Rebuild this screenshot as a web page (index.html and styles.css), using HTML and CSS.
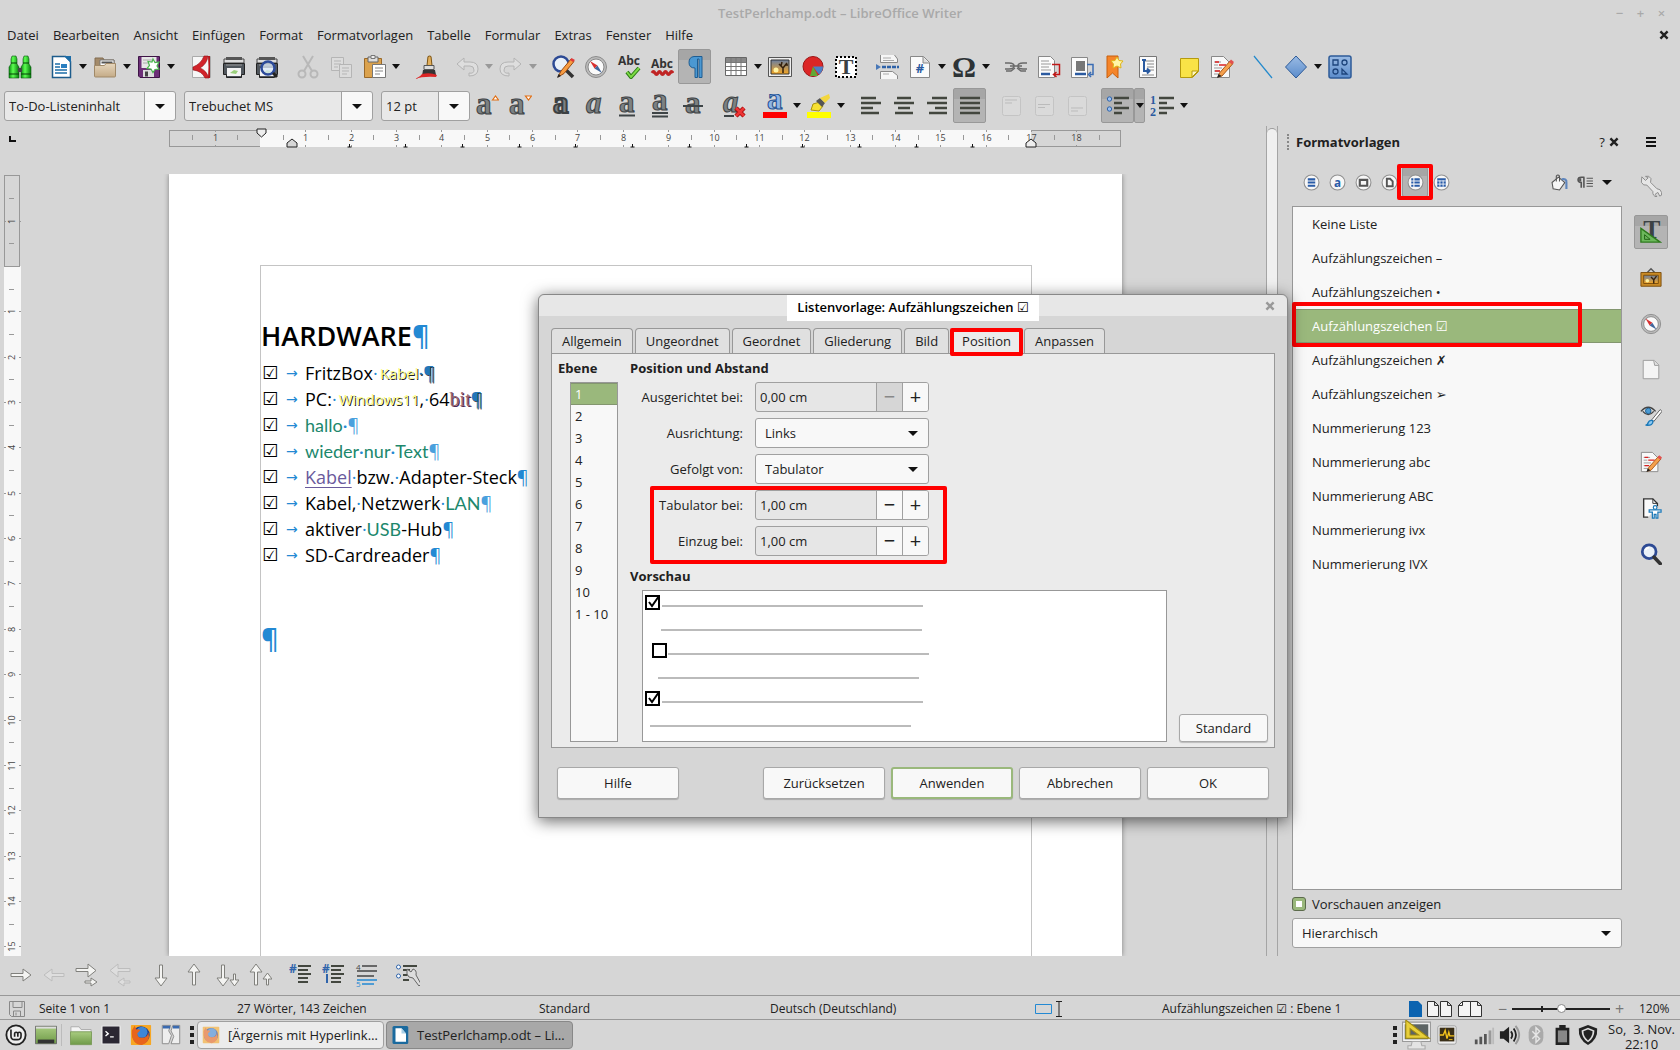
FILE: index.html
```
<!DOCTYPE html>
<html lang="de">
<head>
    <meta charset="UTF-8">
    <meta name="viewport" content="width=device-width, initial-scale=1.0">
    <title>TestPerlchamp.odt – LibreOffice Writer</title>
    <link rel="stylesheet" href="styles.css">
</head>
<body>
    <!-- gradients for the icons -->
    <svg class="gradients" aria-hidden="true">
        <defs>
            <linearGradient id="g-green" x1="0" x2="1"><stop offset="0" stop-color="#0a8a10"/><stop offset=".4" stop-color="#5cff50"/><stop offset="1" stop-color="#067a0c"/></linearGradient>
            <linearGradient id="g-folder" x1="0" x2="0" y1="0" y2="1"><stop offset="0" stop-color="#e6d6bd"/><stop offset="1" stop-color="#c4ab87"/></linearGradient>
            <linearGradient id="g-mint" x1="0" x2="0" y1="0" y2="1"><stop offset="0" stop-color="#a9cc80"/><stop offset="1" stop-color="#6f9a48"/></linearGradient>
            <linearGradient id="g-sky" x1="0" x2="0" y1="0" y2="1"><stop offset="0" stop-color="#6b7fa0"/><stop offset="1" stop-color="#f5a623"/></linearGradient>
            <linearGradient id="g-blue" x1="0" x2="0" y1="0" y2="1"><stop offset="0" stop-color="#9abbe4"/><stop offset="1" stop-color="#5b8ccb"/></linearGradient>
        </defs>
    </svg>
    <!-- icon sprite -->
    <svg class="sprite" aria-hidden="true">
        <symbol id="i-find" viewBox="0 0 24 24"><g fill="url(#g-green)" stroke="#0a5a10" stroke-width=".6"><path d="M4 1h4l1 3v5l2 3v11H1V12l2-3V4z"/><path d="M16 1h4l1 3v5l2 3v11H13V12l2-3V4z"/></g><path d="M10 13h4v4h-4z" fill="#444"/><path d="M1 19h10M13 19h10M3 8h6M15 8h6" stroke="#063f08"/></symbol>
        <symbol id="i-new" viewBox="0 0 24 24"><path d="M3.500 1.500h13l5 5v16h-18z" fill="#fff" stroke="#1d5c8c" stroke-width="1.500"/><path d="M15 1h7v7z" fill="#1d6da8"/><path d="M6 9h5M6 12h5M6 15h12M6 18h12" stroke="#1d6da8" stroke-width="1.500"/><path d="M12 9h6v4h-6z" fill="#2a7fc0"/></symbol>
        <symbol id="i-open" viewBox="0 0 24 24"><path d="M2 3h8l1 2h10v9H2z" fill="#a48b6a" stroke="#826d50"/><path d="M7 5h14v10H7z" fill="#fff" stroke="#777"/><path d="M8.500 6.500h11v2h-11z" fill="#555"/><path d="M1.500 10.500h10l1.500-2h9.500v12.500q0 1-1 1h-19q-1 0-1-1z" fill="url(#g-folder)" stroke="#a08968"/></symbol>
        <symbol id="i-save" viewBox="0 0 24 24"><path d="M1.500 1.500h21v21H3l-1.500-1.500z" fill="#6d2f78" stroke="#3e1546"/><path d="M4.500 2h15v11h-15z" fill="#e7e7e7"/><path d="M6 5h10M6 8h8" stroke="#aaa"/><path d="M6 15h11v7H6z" fill="#ddd"/><path d="M8 16.500h3v5H8z" fill="#444"/><path d="M16 4l2 3.500 4-.5-2 4 2 3-4 .5-2 3-2-3.500-4-.5 2.500-3-1.500-4 4 .5z" fill="#fff" stroke="#49b44d" stroke-width="1.200"/></symbol>
        <symbol id="i-pdf" viewBox="0 0 24 24"><path d="M3.500 1.500h18v21h-18z" fill="#f6f6f6" stroke="#aaa"/><path d="M15 1h4q-1 8-8 12 6 2 9 10h-4Q13 16 4 15v-3Q12 9 15 1z" fill="#d2232a" stroke="#8f1216" stroke-width=".6"/><path d="M21 1v22h-2q1-11 0-22z" fill="#b3161b"/></symbol>
        <symbol id="i-print" viewBox="0 0 24 24"><path d="M2 4h20v4H2z" fill="#ddd" stroke="#444"/><path d="M4 2h16v3H4z" fill="#555"/><path d="M1.500 8.500h21v11h-3v3h-15v-3h-3z" fill="#50565c" stroke="#222"/><path d="M5 13h14v8H5z" fill="#f4f4f4"/><path d="M8 18l4-3 4 1-2 3z" fill="#9bd07c"/><path d="M4 10h16" stroke="#999"/></symbol>
        <symbol id="i-preview" viewBox="0 0 24 24"><use href="#i-print"/><circle cx="13" cy="13" r="6.500" fill="#dbe8f8" fill-opacity=".75" stroke="#2c4a9a" stroke-width="2.500"/><path d="M18 18l4 4" stroke="#222" stroke-width="3"/></symbol>
        <symbol id="i-cut" viewBox="0 0 24 24"><g fill="none" stroke="#b8b8b8" stroke-width="2"><path d="M7 1l9 15M17 1L8 16"/><circle cx="6" cy="19" r="3.500"/><circle cx="18" cy="19" r="3.500"/></g></symbol>
        <symbol id="i-copy" viewBox="0 0 24 24"><g fill="#dcdcdc" stroke="#b5b5b5"><path d="M2.500 2.500h12v13h-12z"/><path d="M10.500 9.500h12v13h-12z"/><path d="M5 6h7M5 9h7M5 12h4M13 13h7M13 16h7M13 19h5"/></g></symbol>
        <symbol id="i-paste" viewBox="0 0 24 24"><path d="M2.500 3.500h17v19h-17z" fill="#dba24d" stroke="#99692a"/><path d="M6 2h10v5H6z" fill="#ddd" stroke="#666"/><path d="M9 .5h4v3H9z" fill="#eee" stroke="#777"/><path d="M10.500 9.500h13v13h-13z" fill="#fff" stroke="#777"/><path d="M13 13h8M13 16h8M13 19h5" stroke="#888"/></symbol>
        <symbol id="i-brush" viewBox="0 0 24 24"><path d="M14 1.500q2-1 3 0l1 9h-5z" fill="#e3b05c" stroke="#7c5312"/><path d="M10 10.500h10v4H10z" fill="#ddd" stroke="#555"/><path d="M9 15h12l1 5-14 1z" fill="#353535"/><path d="M8 19q8-2 15 1l-1 2q-12-1-22 2q6-2 8-5z" fill="#dc2626"/></symbol>
        <symbol id="i-undo" viewBox="0 0 24 24"><path d="M9 3L2 9l7 6v-4h6q4 0 4 4t-5 3v3q9 0 9-7t-8-7H9z" fill="#dedede" stroke="#b4b4b4"/></symbol>
        <symbol id="i-redo" viewBox="0 0 24 24"><path d="M15 3l7 6-7 6v-4H9q-4 0-4 4t5 3v3q-9 0-9-7t8-7h6z" fill="#dedede" stroke="#b4b4b4"/></symbol>
        <symbol id="i-lens" viewBox="0 0 24 24"><circle cx="10" cy="9.500" r="7.500" fill="#e9f0f8" stroke="#2d4a94" stroke-width="3"/><path d="M15.500 15.500l6.500 7" stroke="#333" stroke-width="4" stroke-linecap="round"/><path d="M6 8q1-3 4-3" fill="none" stroke="#fff" stroke-width="2"/></symbol>
        <symbol id="i-replace" viewBox="0 0 24 24"><circle cx="10" cy="9" r="7.500" fill="#e9f0f8" stroke="#2d4a94" stroke-width="2.500"/><path d="M15 15l7 7" stroke="#333" stroke-width="3.500"/><path d="M7 22l3-6L20 4l3 2.500-10 12z" fill="#f79c42" stroke="#9b4c12"/><path d="M19 5l1.500-2 3.500 2-2 2z" fill="#e03a3a"/><path d="M6 23l1.500-4 2.500 2z" fill="#222"/></symbol>
        <symbol id="i-compass" viewBox="0 0 24 24"><circle cx="12" cy="12" r="10.500" fill="#bbb" stroke="#8c8c8c"/><circle cx="12" cy="12" r="8" fill="#fafafa" stroke="#888"/><path d="M6 6l7.500 4.500-3 3z" fill="#d93030"/><path d="M18 18l-7.500-4.500 3-3z" fill="#42679d"/></symbol>
        <symbol id="i-spell" viewBox="0 0 24 24"><text class="abc" x="12" y="10">Abc</text><path d="M10 17l4 5 8-9" fill="none" stroke="#2c7a16" stroke-width="4"/><path d="M10 17l4 5 8-9" fill="none" stroke="#7ddb45" stroke-width="2"/></symbol>
        <symbol id="i-auto" viewBox="0 0 24 24"><text class="abc" x="12" y="13">Abc</text><path d="M2 18q1.500-3 3 0t3 0 3 0 3 0 3 0 3 0 3 0" fill="none" stroke="#c02424" stroke-width="3"/></symbol>
        <symbol id="i-pilcrow" viewBox="0 0 24 24"><path d="M19 1.500h-8Q6 2 6 7.500t6 5.500v9.500h2.500V4h1.500v18.500h3z" fill="#4b98d2" stroke="#1e5d92"/></symbol>
        <symbol id="i-table" viewBox="0 0 24 24"><path d="M1.500 2.500h21v18h-21z" fill="#fff" stroke="#666"/><path d="M2 3h20v4H2z" fill="#888"/><path d="M2 7.500h20M2 11.500h20M2 15.500h20M7 3v17M12 3v17M17 3v17" stroke="#777"/></symbol>
        <symbol id="i-image" viewBox="0 0 24 24"><path d="M.5 2.500h23v19H.5z" fill="#eee" stroke="#555"/><path d="M3 5h18v14H3z" fill="url(#g-sky)" stroke="#333"/><circle cx="8" cy="15" r="2.500" fill="#fff2a0"/><path d="M15 18v-5l-4-4M15 13l4-5M13 11l1-4M17 10l3 0" fill="none" stroke="#33200e" stroke-width="1.500"/></symbol>
        <symbol id="i-chart" viewBox="0 0 24 24"><circle cx="12" cy="11.500" r="10" fill="#dc2626" stroke="#9c1515"/><path d="M12 11.500h10a10 10 0 0 1-4 8z" fill="#4c80c6"/><path d="M12 11.500l5 9.500H9z" fill="#62a834"/></symbol>
        <symbol id="i-textbox" viewBox="0 0 24 24"><path d="M2 2h20v20H2z" fill="#fff" stroke="#000" stroke-width="2" stroke-dasharray="2 2"/><text class="serif-t" x="12" y="19">T</text></symbol>
        <symbol id="i-break" viewBox="0 0 24 24"><path d="M5.500 0v7.500h17V4l-3-4" fill="#f6f6f6" stroke="#888"/><path d="M5.500 24v-7.500h12l5 4V24" fill="#f6f6f6" stroke="#888"/><path d="M8 3h8M8 5.500h11M8 19h6" stroke="#aaa"/><path d="M1 9l5 3-5 3z" fill="#4878b8"/><path d="M7 12h17" stroke="#2e62a8" stroke-width="2.500" stroke-dasharray="4 1"/></symbol>
        <symbol id="i-field" viewBox="0 0 24 24"><path d="M2.500 1.500h13l6 6v15h-19z" fill="#fbfbfb" stroke="#888"/><path d="M15 2v6h6" fill="#ddd" stroke="#888"/><text class="hash" x="12" y="18">#</text></symbol>
        <symbol id="i-omega" viewBox="0 0 24 24"><text class="omega" x="12" y="22">Ω</text></symbol>
        <symbol id="i-link" viewBox="0 0 24 24"><g fill="none" stroke="#6a6a6a" stroke-width="1.500"><path d="M1 8h4q5 0 5 3t-5 3H1M23 8h-4q-5 0-5 3t5 3h4"/><path d="M6 11h12M2 16h5l4-3M22 16h-5l-4-3"/></g></symbol>
        <symbol id="i-footnote" viewBox="0 0 24 24"><path d="M1.500 1.500h12l4 4v17h-16z" fill="#fbfbfb" stroke="#888"/><path d="M4 6h8M4 9h10M4 12h8M4 15h10" stroke="#999"/><path d="M4 19h9" stroke="#2a5aa0" stroke-width="2.500"/><path d="M15 9.500h7.500v10h-5m2-2.500l-3 2.500 3 2.500" fill="none" stroke="#c01818" stroke-width="1.500"/></symbol>
        <symbol id="i-endnote" viewBox="0 0 24 24"><path d="M1.500 2.500h16v20h-16z" fill="#fbfbfb" stroke="#888"/><path d="M6 6h9v10H6z" fill="#777"/><path d="M5 19h11" stroke="#2a5aa0" stroke-width="2.500"/><path d="M17 9.500h6v10h-3m1-2.500l-2.500 2.500 2.500 2.500" fill="none" stroke="#3a6cb4" stroke-width="1.500"/></symbol>
        <symbol id="i-bookmark" viewBox="0 0 24 24"><path d="M4 1h11v22l-5.500-5L4 23z" fill="#f5852a" stroke="#c85f0d"/><path d="M14 2l2 3.500 4 .5-2.500 3 .5 4-4-2-4 2 .5-4-2.500-3 4-.5z" fill="#fff6a8" stroke="#e0b516"/></symbol>
        <symbol id="i-xref" viewBox="0 0 24 24"><path d="M3.500 1.500h17v21h-17z" fill="#fbfbfb" stroke="#777"/><path d="M9 6h9M11 9h7M11 12h7M11 15h7M6 20h12" stroke="#888"/><path d="M6 5h4M8 5v11h5m-2-2.500l2.500 2.500-2.500 2.500" fill="none" stroke="#2a5aa0" stroke-width="2"/></symbol>
        <symbol id="i-note" viewBox="0 0 24 24"><path d="M3.500 3.500h18v13l-6 6h-12z" fill="#f9e347" stroke="#b59a0e"/><path d="M15 22v-6h6z" fill="#fff9c0" stroke="#b59a0e"/></symbol>
        <symbol id="i-track" viewBox="0 0 24 24"><path d="M1.500 1.500h12l6 6v15h-18z" fill="#f8f8f8" stroke="#888"/><path d="M4 7h7M4 10h4M4 13h8M4 16h6M4 19h5" stroke="#999"/><path d="M5 7h4M9 10h7M5 16h5" stroke="#dc2020" stroke-width="1.500"/><path d="M8 22l1.500-4L20 6l3 2.500L12 21z" fill="#f5a04c" stroke="#a8581a"/><path d="M19 7l2-2.500 3 2.500-2 2.500z" fill="#e25050"/><path d="M7 23l1.500-4 3 2z" fill="#222"/></symbol>
        <symbol id="i-line" viewBox="0 0 24 24"><path d="M3 1l18 22" stroke="#2289cc" stroke-width="1.200"/></symbol>
        <symbol id="i-diamond" viewBox="0 0 24 24"><path d="M12 1l10.500 11L12 23 1.500 12z" fill="url(#g-blue)" stroke="#2e5b98"/></symbol>
        <symbol id="i-shapes" viewBox="0 0 24 24"><rect x="1" y="1" width="22" height="22" rx="2" fill="url(#g-blue)" stroke="#2e5b98" stroke-width="1.500"/><g fill="none" stroke="#1d447c" stroke-width="1.300"><path d="M5 5h5v5H5zM14 14v5h5z"/><circle cx="16.500" cy="7.500" r="2.500"/><circle cx="7.500" cy="16.500" r="2.500"/></g></symbol>

        <symbol id="i-grow" viewBox="0 0 24 24"><text class="a-dark" x="1" y="20">a</text><path d="M17.500 6l3-4 3 4z" fill="#fff" stroke="#e06c10" stroke-width="1.200"/></symbol>
        <symbol id="i-shrink" viewBox="0 0 24 24"><text class="a-dark" x="1" y="20">a</text><path d="M17.500 2h6l-3 4z" fill="#fff" stroke="#e06c10" stroke-width="1.200"/></symbol>
        <symbol id="i-bold" viewBox="0 0 24 24"><text class="a-dark heavy" x="4" y="19">a</text></symbol>
        <symbol id="i-italic" viewBox="0 0 24 24"><text class="a-dark slant" x="4" y="19">a</text></symbol>
        <symbol id="i-under" viewBox="0 0 24 24"><text class="a-dark" x="4" y="18">a</text><path d="M4 21.500h16" stroke="#3e4446" stroke-width="2"/></symbol>
        <symbol id="i-dunder" viewBox="0 0 24 24"><text class="a-dark" x="4" y="16">a</text><path d="M4 19h16M4 22.500h16" stroke="#3e4446" stroke-width="2"/></symbol>
        <symbol id="i-strike" viewBox="0 0 24 24"><text class="a-dark" x="4" y="19">a</text><path d="M2 12h20" stroke="#3e4446" stroke-width="2"/></symbol>
        <symbol id="i-clear" viewBox="0 0 24 24"><text class="a-dark slant" x="1" y="18">a</text><path d="M2 22h10" stroke="#3e4446" stroke-width="2"/><path d="M14 14l8 8M22 14l-8 8" stroke="#a30d0d" stroke-width="4.500"/><path d="M14 14l8 8M22 14l-8 8" stroke="#ee3434" stroke-width="2.500"/></symbol>
        <symbol id="i-color" viewBox="0 0 24 24"><text class="a-dark a-blue" x="4" y="15">a</text><path d="M0 18h24v6H0z" fill="#f00"/></symbol>
        <symbol id="i-mark" viewBox="0 0 24 24"><path d="M4 16l2-6 7-2 3 4-4 5z" fill="#f7e032" stroke="#a8930b"/><path d="M9 7l4-3 5 5-3 4z" fill="#555"/><path d="M13 4l9-4 1 4-5 5z" fill="#f3d63e"/><path d="M0 18h24v6H0z" fill="#ff0"/></symbol>
        <symbol id="i-left" viewBox="0 0 24 24"><path d="M2 4h15M2 9h20M2 14h12M2 19h18" stroke="#43473f" stroke-width="2.500"/></symbol>
        <symbol id="i-center" viewBox="0 0 24 24"><path d="M5 4h14M2 9h20M6 14h12M3 19h18" stroke="#43473f" stroke-width="2.500"/></symbol>
        <symbol id="i-right" viewBox="0 0 24 24"><path d="M7 4h15M2 9h20M10 14h12M4 19h18" stroke="#43473f" stroke-width="2.500"/></symbol>
        <symbol id="i-just" viewBox="0 0 24 24"><path d="M2 4h20M2 9h20M2 14h20M2 19h20" stroke="#43473f" stroke-width="2.500"/></symbol>
        <symbol id="i-vtop" viewBox="0 0 24 24"><rect x="3.500" y="2.500" width="18" height="19" rx="2" fill="#dadada" stroke="#c4c4c4"/><path d="M6 6h12M6 9h7" stroke="#bbb"/></symbol>
        <symbol id="i-vmid" viewBox="0 0 24 24"><rect x="3.500" y="2.500" width="18" height="19" rx="2" fill="#dadada" stroke="#c4c4c4"/><path d="M6 10.500h12M6 13.500h7" stroke="#bbb"/></symbol>
        <symbol id="i-vbot" viewBox="0 0 24 24"><rect x="3.500" y="2.500" width="18" height="19" rx="2" fill="#dadada" stroke="#c4c4c4"/><path d="M6 14h12M6 17h7" stroke="#bbb"/></symbol>
        <symbol id="i-bullets" viewBox="0 0 24 24"><circle cx="3.500" cy="5" r="2.200" fill="#9dc0ee" stroke="#2f64ab"/><circle cx="3.500" cy="15" r="2.200" fill="#9dc0ee" stroke="#2f64ab"/><path d="M8 4h15M8 9h8M8 14h15M8 19h8" stroke="#43473f" stroke-width="2.500"/></symbol>
        <symbol id="i-numbers" viewBox="0 0 24 24"><text class="num" x="0" y="10">1</text><text class="num" x="0" y="22">2</text><path d="M9 4h15M9 9h8M9 14h15M9 19h8" stroke="#43473f" stroke-width="2.500"/></symbol>

        <symbol id="i-s-para" viewBox="0 0 16 16"><circle cx="8" cy="8" r="7" class="ring"/><path d="M4.500 5h7M4.500 8h7M4.500 11h7" stroke="#2a5ca8" stroke-width="2"/></symbol>
        <symbol id="i-s-char" viewBox="0 0 16 16"><circle cx="8" cy="8" r="7" class="ring"/><text class="s-a" x="8" y="12">a</text></symbol>
        <symbol id="i-s-frame" viewBox="0 0 16 16"><circle cx="8" cy="8" r="7" class="ring"/><path d="M4.500 5.500h7v5.500h-7z" fill="none" stroke="#555" stroke-width="2"/></symbol>
        <symbol id="i-s-page" viewBox="0 0 16 16"><circle cx="8" cy="8" r="7" class="ring"/><path d="M5.500 4.500h3l2.500 2.500v4.500H5.500z" fill="none" stroke="#555" stroke-width="1.800"/></symbol>
        <symbol id="i-s-list" viewBox="0 0 16 16"><circle cx="8" cy="8" r="7" class="ring"/><path d="M4 5h2M4 8h2M4 11h2M7 5h5M7 8h5M7 11h5" stroke="#2a5ca8" stroke-width="2"/></symbol>
        <symbol id="i-s-table" viewBox="0 0 16 16"><circle cx="8" cy="8" r="7" class="ring"/><path d="M4 4h8v8H4z" fill="#2a5ca8"/><path d="M4 6.500h8M4 9.500h8M6.500 6v6M9.500 6v6" stroke="#fff" stroke-width=".8"/></symbol>
        <symbol id="i-fill" viewBox="0 0 16 16"><path d="M1 8l6-5 6 5-5 7-6-1z" fill="#f6f6f6" stroke="#555"/><path d="M5 7V2q1.500-2 3 0v5" fill="none" stroke="#555"/><path d="M10 5q5-1 4.500 3v6" fill="none" stroke="#5f86bd" stroke-width="2"/></symbol>
        <symbol id="i-newstyle" viewBox="0 0 16 16"><path d="M7 3H4Q1 3 1 5.500T4 8v5M6.500 3v10" fill="none" stroke="#555" stroke-width="1.500"/><path d="M2 4h2v3H2z" fill="#555"/><path d="M9 4h6M9 6.500h6M9 9h6M9 11.500h6" stroke="#555" stroke-width="1"/></symbol>

        <symbol id="i-wrench" viewBox="0 0 24 24"><path d="M2 2l4 4 3-3-3-1.500Q10 0 12 4l-.5 4 7 7q4 0 5 4t-2 4l-2-4-3 2 2 3q-5-1-4.500-6L7.500 11q-4 1-6-3z" fill="#e6e6e6" stroke="#888"/></symbol>
        <symbol id="i-styles" viewBox="0 0 24 24"><text class="style-t" x="13" y="19">T</text><path d="M1 8l21 15H1z" fill="#6cb85c" stroke="#2d7a1c" stroke-width="1.500"/><path d="M5 15l6 5H5z" fill="none" stroke="#1f5e12"/></symbol>
        <symbol id="i-gallery" viewBox="0 0 24 24"><path d="M8 6l4-4 4 4" fill="none" stroke="#555" stroke-width="1.500"/><path d="M1 6h22v15H1z" fill="#c98a25" stroke="#7a4d0c"/><path d="M4 9h16v9H4z" fill="url(#g-sky)" stroke="#7a4d0c"/><circle cx="8" cy="15" r="2" fill="#fff2a0"/><path d="M15 18v-4l-3-3M15 14l3-4" fill="none" stroke="#33200e" stroke-width="1.500"/></symbol>
        <symbol id="i-page" viewBox="0 0 24 24"><path d="M3.500 1.500h12l5 5v15h-17z" fill="#f4f4f4" stroke="#999"/><path d="M15 2l1 5 4.500 0" fill="#ddd" stroke="#999"/></symbol>
        <symbol id="i-inspect" viewBox="0 0 24 24"><path d="M1 7q8-9 16 0M3 7q6 7 12 0" fill="none" stroke="#444" stroke-width="1.500"/><circle cx="9" cy="6.500" r="3" fill="#4a9bd4" stroke="#1c5e91"/><path d="M22 5L13 16l2 2 9-11z" fill="#fff" stroke="#555"/><path d="M6 22q2 0 3-3t5-2q1 6-8 5z" fill="#8cc8f0" stroke="#1a78b8" stroke-width="1.500"/></symbol>
        <symbol id="i-access" viewBox="0 0 24 24"><path d="M9 22H4V2h10l5 5v3" fill="#fafafa" stroke="#333" stroke-width="1.500"/><path d="M14 2v5h5" fill="none" stroke="#333"/><circle cx="16.500" cy="11.500" r="2" fill="#fff" stroke="#1a78b8" stroke-width="1.300"/><path d="M10 14h13v2.500h-3.500V23h-2v-4h-2v4h-2v-6.500H10z" fill="#fff" stroke="#1a78b8" stroke-width="1.300"/></symbol>

        <symbol id="i-ar" viewBox="0 0 24 24"><path d="M2 10.500h12V6l8 6-8 6v-4.500H2z" class="arw"/></symbol>
        <symbol id="i-al" viewBox="0 0 24 24"><path d="M22 10.500H10V6l-8 6 8 6v-4.500h12z" class="arw off"/></symbol>
        <symbol id="i-arr" viewBox="0 0 24 24"><path d="M1 5.500h12V1l8 6.500-8 6.500V8.500H1z" class="arw"/><path d="M10 18h6v-3l6 4-6 4v-3h-6z" class="arw"/></symbol>
        <symbol id="i-all" viewBox="0 0 24 24"><path d="M22 5.500H10V1L2 7.500l8 6.500V8.500h12z" class="arw off"/><path d="M22 18h-6v-3l-6 4 6 4v-3h6z" class="arw off"/></symbol>
        <symbol id="i-ad" viewBox="0 0 24 24"><path d="M10.500 2v13H6l6 8 6-8h-4.500V2z" class="arw"/></symbol>
        <symbol id="i-au" viewBox="0 0 24 24"><path d="M10.500 22V9H6l6-8 6 8h-4.500v13z" class="arw"/></symbol>
        <symbol id="i-add" viewBox="0 0 24 24"><path d="M6.500 2v13H2l6 8 6-8H9.500V2z" class="arw"/><path d="M18.500 11v6H15l4.500 6 4.500-6h-3.500v-6z" class="arw"/></symbol>
        <symbol id="i-auu" viewBox="0 0 24 24"><path d="M6.500 22V9H2l6-8 6 8H9.500v13z" class="arw"/><path d="M18.500 22v-6H15l4.500-6 4.500 6h-3.500v6z" class="arw"/></symbol>
        <symbol id="i-n1" viewBox="0 0 24 24"><text class="hash-s" x="0" y="10">#</text><path d="M9 3h13M9 7h10M9 11h13M9 15h10M9 19h10" stroke="#43473f" stroke-width="2"/></symbol>
        <symbol id="i-n2" viewBox="0 0 24 24"><use href="#i-n1"/><path d="M5 11v9" stroke="#2f64ab" stroke-width="2"/></symbol>
        <symbol id="i-n3" viewBox="0 0 24 24"><text class="tiny" x="1" y="7">4</text><path d="M7 3h15M2 8h20M2 13h17" stroke="#444" stroke-width="1.500"/><text class="tiny blue" x="1" y="24">5</text><path d="M2 17h20M7 21h12" stroke="#2389d3" stroke-width="1.500"/></symbol>
        <symbol id="i-n4" viewBox="0 0 24 24"><circle cx="2.500" cy="4" r="2" fill="#fff" stroke="#2f64ab"/><circle cx="2.500" cy="13" r="2" fill="#fff" stroke="#2f64ab"/><path d="M7 3h14M7 7h7M7 12h9M7 17h6" stroke="#43473f" stroke-width="2"/><path d="M11 6l4 3 2-3q4 1 3 6l5 9-2 2-6-8q-5 0-6-4z" fill="#ddd" stroke="#666"/></symbol>

        <symbol id="i-mint" viewBox="0 0 24 24"><circle cx="12" cy="12" r="10.500" fill="#eee" stroke="#222" stroke-width="2"/><path d="M6.500 6v7q0 4 4 4h3q4 0 4-4v-2q0-2-1.800-2T14 11v3m0-3q0-2-1.800-2T10.500 11v3" fill="none" stroke="#222" stroke-width="1.800"/></symbol>
        <symbol id="i-desktop" viewBox="0 0 24 24"><path d="M.5 2.500h23v19H.5z" fill="url(#g-mint)" stroke="#666"/><path d="M1 3h22v2H1z" fill="#ddd"/><path d="M3 17h18v4H3z" fill="#333"/></symbol>
        <symbol id="i-files" viewBox="0 0 24 24"><path d="M1 3h9l2 3h11v6H1z" fill="#f4f4f4" stroke="#aaa"/><path d="M.5 8.500h23v14H.5z" fill="url(#g-mint)" stroke="#7a9a58"/></symbol>
        <symbol id="i-term" viewBox="0 0 24 24"><rect x="2" y="2" width="20" height="20" rx="1" fill="#2b2733" stroke="#eee" stroke-width="1.500"/><path d="M6 8l3 2.500L6 13M11 14h4" fill="none" stroke="#fff" stroke-width="1.500"/></symbol>
        <symbol id="i-fox" viewBox="0 0 24 24"><rect x="1" y="1" width="22" height="22" rx="1" fill="#f7a723"/><circle cx="12" cy="12" r="9.500" fill="#1e3f8f"/><circle cx="13" cy="9" r="6" fill="#3e86d6"/><path d="M2 7l3-5 2 4q3-1 4 1l-3 3q0 5 5 5 6 0 7-6 3 11-7 14Q1 22 2 7z" fill="#e8641b"/></symbol>
        <symbol id="i-windows" viewBox="0 0 24 24"><path d="M2.500 1.500h9l-2 6 3 5-3 9h-7z" fill="#eee" stroke="#888"/><path d="M14 1.500h7.500v20H12l3-8-3-6z" fill="#eee" stroke="#888"/><path d="M3 2h8v3H3zM14 2h7v3h-7z" fill="#3a6ab0"/></symbol>
        <symbol id="i-writer" viewBox="0 0 24 24"><rect x="2" y="0" width="21" height="24" rx="2" fill="#1b6a9e"/><path d="M6 3h8l6 7v11H6z" fill="#fff"/><path d="M14 3l6 7h-6z" fill="#a9cfe6"/></symbol>
        <symbol id="i-ruler" viewBox="0 0 28 28"><path d="M1 2h26v18H1z" fill="#f2f2f2" stroke="#999"/><path d="M3 4h22v14H3z" fill="#5d6464"/><path d="M10 20h8l1 4h3v3H6v-3h3z" fill="#e4e4e4" stroke="#aaa"/><path d="M4 0l22 17H4z" fill="#e8cf3a" stroke="#a08a12"/><path d="M8 8l8 6H8z" fill="#5d6464" stroke="#a08a12"/></symbol>
        <symbol id="i-monitor" viewBox="0 0 24 24"><rect x="2" y="2" width="20" height="20" rx="2" fill="#eee" stroke="#999"/><path d="M4 4h16v15H4z" fill="#3a2f18"/><path d="M4 12h4l2-5 2 9 2-7 1 4h5" fill="none" stroke="#f5c41c" stroke-width="1.500"/><path d="M14 17h4" stroke="#f5c41c"/></symbol>
        <symbol id="i-signal" viewBox="0 0 24 24"><path d="M2 17h3v5H2zM7 14h3v8H7zM12 11h3v11h-3z" fill="#555"/><path d="M17 7h3v15h-3z" fill="#999"/><path d="M21 4h2v18h-2z" fill="#bbb"/></symbol>
        <symbol id="i-sound" viewBox="0 0 24 24"><path d="M1 8h4l6-5v18l-6-5H1z" fill="#222"/><path d="M13 8q3 4 0 8M16 5q5 7 0 14" fill="none" stroke="#222" stroke-width="2"/><path d="M18 2q8 10 0 20" fill="none" stroke="#999" stroke-width="2"/></symbol>
        <symbol id="i-bt" viewBox="0 0 24 24"><rect x="4" y="1" width="16" height="22" rx="8" fill="#aaa"/><path d="M8 8l8 8-4 4V4l4 4-8 8" fill="none" stroke="#e6e6e6" stroke-width="1.500"/></symbol>
        <symbol id="i-batt" viewBox="0 0 24 24"><path d="M9 1h7v3h4v19H5V4h4z" fill="#222"/><path d="M7.500 7h10v13h-10z" fill="#888"/></symbol>
        <symbol id="i-shield" viewBox="0 0 24 24"><path d="M12 1l10 4q1 12-10 18Q1 17 2 5z" fill="#222"/><path d="M12 4l7 3q0 8-7 13-7-5-7-13z" fill="#ddd"/><path d="M12 6l5 2q0 6-5 10-5-4-5-10z" fill="#222"/></symbol>
    </svg>

    <header class="titlebar">
        <span class="title">TestPerlchamp.odt – LibreOffice Writer</span>
        <span class="win-buttons"><button>−</button><button>+</button><button>×</button></span>
    </header>

    <nav class="menubar">
        <button>Datei</button>
        <button>Bearbeiten</button>
        <button>Ansicht</button>
        <button>Einfügen</button>
        <button>Format</button>
        <button>Formatvorlagen</button>
        <button>Tabelle</button>
        <button>Formular</button>
        <button>Extras</button>
        <button>Fenster</button>
        <button>Hilfe</button>
        <button class="close-doc" title="Dokument schließen"><svg viewBox="0 0 10 10"><path d="M2 2l6 6M8 2l-6 6"/></svg></button>
    </nav>

    <div class="toolbar">
        <button title="Suchen"><svg><use href="#i-find"/></svg></button>
        <i class="sep"></i>
        <button title="Neu"><svg><use href="#i-new"/></svg></button><button class="caret" title="Neu, Liste"></button>
        <button title="Öffnen"><svg><use href="#i-open"/></svg></button><button class="caret" title="Öffnen, Liste"></button>
        <button title="Speichern"><svg><use href="#i-save"/></svg></button><button class="caret" title="Speichern, Liste"></button>
        <i class="sep"></i>
        <button title="Als PDF exportieren"><svg><use href="#i-pdf"/></svg></button>
        <button title="Drucken"><svg><use href="#i-print"/></svg></button>
        <button title="Druckvorschau"><svg><use href="#i-preview"/></svg></button>
        <i class="sep"></i>
        <button title="Ausschneiden" disabled><svg><use href="#i-cut"/></svg></button>
        <button title="Kopieren" disabled><svg><use href="#i-copy"/></svg></button>
        <button title="Einfügen"><svg><use href="#i-paste"/></svg></button><button class="caret" title="Einfügen, Liste"></button>
        <i class="sep"></i>
        <button title="Format übertragen"><svg><use href="#i-brush"/></svg></button>
        <i class="sep"></i>
        <button title="Rückgängig" disabled><svg><use href="#i-undo"/></svg></button><button class="caret" title="Rückgängig, Liste" disabled></button>
        <button title="Wiederherstellen" disabled><svg><use href="#i-redo"/></svg></button><button class="caret" title="Wiederherstellen, Liste" disabled></button>
        <i class="sep"></i>
        <button title="Suchen und Ersetzen"><svg><use href="#i-replace"/></svg></button>
        <button title="Navigator"><svg><use href="#i-compass"/></svg></button>
        <button title="Rechtschreibung"><svg><use href="#i-spell"/></svg></button>
        <button title="Automatische Rechtschreibprüfung"><svg><use href="#i-auto"/></svg></button>
        <button class="on" title="Formatierungszeichen"><svg><use href="#i-pilcrow"/></svg></button>
        <i class="sep"></i>
        <button title="Tabelle"><svg><use href="#i-table"/></svg></button><button class="caret" title="Tabelle, Liste"></button>
        <button title="Bild"><svg><use href="#i-image"/></svg></button>
        <button title="Diagramm"><svg><use href="#i-chart"/></svg></button>
        <button title="Textfeld"><svg><use href="#i-textbox"/></svg></button>
        <i class="sep"></i>
        <button title="Seitenumbruch"><svg><use href="#i-break"/></svg></button>
        <button title="Feldbefehl"><svg><use href="#i-field"/></svg></button><button class="caret" title="Feldbefehl, Liste"></button>
        <button title="Sonderzeichen"><svg><use href="#i-omega"/></svg></button><button class="caret" title="Sonderzeichen, Liste"></button>
        <i class="sep"></i>
        <button title="Hyperlink"><svg><use href="#i-link"/></svg></button>
        <button title="Fußnote"><svg><use href="#i-footnote"/></svg></button>
        <button title="Endnote"><svg><use href="#i-endnote"/></svg></button>
        <button title="Lesezeichen"><svg><use href="#i-bookmark"/></svg></button>
        <button title="Querverweis"><svg><use href="#i-xref"/></svg></button>
        <i class="sep"></i>
        <button title="Kommentar"><svg><use href="#i-note"/></svg></button>
        <button title="Änderungen"><svg><use href="#i-track"/></svg></button>
        <i class="sep"></i>
        <button title="Linie"><svg><use href="#i-line"/></svg></button>
        <button title="Standardformen"><svg><use href="#i-diamond"/></svg></button><button class="caret" title="Standardformen, Liste"></button>
        <button title="Zeichnungsfunktionen"><svg><use href="#i-shapes"/></svg></button>
    </div>

    <div class="toolbar format-bar">
        <span class="combo split style-name"><select aria-label="Absatzvorlage"><option>To-Do-Listeninhalt</option></select></span>
        <span class="combo split font-name"><select aria-label="Schriftart"><option>Trebuchet MS</option></select></span>
        <span class="combo split font-size"><select aria-label="Schriftgröße"><option>12 pt</option></select></span>
        <button title="Schrift vergrößern"><svg><use href="#i-grow"/></svg></button>
        <button title="Schrift verkleinern"><svg><use href="#i-shrink"/></svg></button>
        <i class="sep"></i>
        <button title="Fett"><svg><use href="#i-bold"/></svg></button>
        <button title="Kursiv"><svg><use href="#i-italic"/></svg></button>
        <button title="Unterstrichen"><svg><use href="#i-under"/></svg></button>
        <button title="Doppelt unterstrichen"><svg><use href="#i-dunder"/></svg></button>
        <button title="Durchgestrichen"><svg><use href="#i-strike"/></svg></button>
        <i class="sep"></i>
        <button title="Direkte Formatierung löschen"><svg><use href="#i-clear"/></svg></button>
        <i class="sep"></i>
        <button title="Schriftfarbe"><svg><use href="#i-color"/></svg></button><button class="caret" title="Schriftfarbe, Liste"></button>
        <button title="Hervorheben"><svg><use href="#i-mark"/></svg></button><button class="caret" title="Hervorheben, Liste"></button>
        <i class="sep"></i>
        <button title="Linksbündig"><svg><use href="#i-left"/></svg></button>
        <button title="Zentriert"><svg><use href="#i-center"/></svg></button>
        <button title="Rechtsbündig"><svg><use href="#i-right"/></svg></button>
        <button class="on" title="Blocksatz"><svg><use href="#i-just"/></svg></button>
        <i class="sep"></i>
        <button title="Oben" disabled><svg><use href="#i-vtop"/></svg></button>
        <button title="Mitte" disabled><svg><use href="#i-vmid"/></svg></button>
        <button title="Unten" disabled><svg><use href="#i-vbot"/></svg></button>
        <i class="sep"></i>
        <button class="on" title="Aufzählungsliste"><svg><use href="#i-bullets"/></svg></button><button class="caret on" title="Aufzählungsliste, Liste"></button>
        <button title="Nummerierte Liste"><svg><use href="#i-numbers"/></svg></button><button class="caret" title="Nummerierte Liste, Liste"></button>
    </div>

    <main>
        <section class="editor">
            <div class="ruler-corner"><i></i></div>
            <svg id="hruler"></svg>
            <svg id="vruler"></svg>
            <div class="canvas">
                <article class="page">
                    <div class="text-area">
                        <h1>HARDWARE<b class="m">¶</b></h1>
                        <ul class="todo">
                            <li>FritzBox<b class="m">·</b><span class="glow">Kabel</span><b class="m dark">·¶</b></li>
                            <li>PC:<b class="m">·</b><span class="glow">Windows11</span>,<b class="m">·</b>64<span class="bit">bit</span><b class="m dark">¶</b></li>
                            <li><span class="green">hallo<b class="m">·</b></span><b class="m thin">¶</b></li>
                            <li><span class="green">wieder<b class="m">·</b>nur<b class="m">·</b>Text</span><b class="m thin">¶</b></li>
                            <li><a href="#">Kabel</a><b class="m">·</b>bzw.<b class="m">·</b>Adapter-Steck<b class="m">¶</b></li>
                            <li>Kabel,<b class="m">·</b>Netzwerk<b class="m">·</b><span class="green">LAN</span><b class="m thin">¶</b></li>
                            <li>aktiver<b class="m">·</b><span class="green">USB</span>-Hub<b class="m">¶</b></li>
                            <li>SD-Cardreader<b class="m">¶</b></li>
                        </ul>
                        <p class="last"><b class="m">¶</b></p>
                    </div>
                </article>
            </div>
            <div class="scrollbar"><i></i></div>
        </section>

        <aside class="sidebar">
            <div class="deck">
                <div class="deck-title">
                    <i class="grip"></i>
                    <h2>Formatvorlagen</h2>
                    <button title="Hilfe">?</button>
                    <button title="Schließen"><svg viewBox="0 0 10 10"><path d="M2 2l6 6M8 2l-6 6"/></svg></button>
                </div>
                <div class="deck-tools">
                    <button title="Absatzvorlagen"><svg><use href="#i-s-para"/></svg></button>
                    <button title="Zeichenvorlagen"><svg><use href="#i-s-char"/></svg></button>
                    <button title="Rahmenvorlagen"><svg><use href="#i-s-frame"/></svg></button>
                    <button title="Seitenvorlagen"><svg><use href="#i-s-page"/></svg></button>
                    <button class="on marked" title="Listenvorlagen"><svg><use href="#i-s-list"/></svg></button>
                    <button title="Tabellenvorlagen"><svg><use href="#i-s-table"/></svg></button>
                    <i class="fill"></i>
                    <button title="Gießkannenmodus"><svg><use href="#i-fill"/></svg></button>
                    <button title="Neue Vorlage"><svg><use href="#i-newstyle"/></svg></button>
                    <button class="caret" title="Aktionen"></button>
                </div>
                <ul class="styles">
                    <li>Keine Liste</li>
                    <li>Aufzählungszeichen –</li>
                    <li>Aufzählungszeichen •</li>
                    <li class="selected marked">Aufzählungszeichen ☑</li>
                    <li>Aufzählungszeichen ✗</li>
                    <li>Aufzählungszeichen ➢</li>
                    <li>Nummerierung 123</li>
                    <li>Nummerierung abc</li>
                    <li>Nummerierung ABC</li>
                    <li>Nummerierung ivx</li>
                    <li>Nummerierung IVX</li>
                </ul>
                <label class="check"><input type="checkbox" checked> Vorschauen anzeigen</label>
                <span class="combo"><select aria-label="Filter"><option>Hierarchisch</option></select></span>
            </div>
            <div class="tab-strip">
                <button class="burger" title="Seitenleisten-Einstellungen"><i></i></button>
                <button title="Eigenschaften"><svg><use href="#i-wrench"/></svg></button>
                <button class="on" title="Formatvorlagen"><svg><use href="#i-styles"/></svg></button>
                <button title="Galerie"><svg><use href="#i-gallery"/></svg></button>
                <button title="Navigator"><svg><use href="#i-compass"/></svg></button>
                <button title="Seite"><svg><use href="#i-page"/></svg></button>
                <button title="Stil-Inspektor"><svg><use href="#i-inspect"/></svg></button>
                <button title="Änderungen verwalten"><svg><use href="#i-track"/></svg></button>
                <button title="Barrierefreiheit"><svg><use href="#i-access"/></svg></button>
                <button title="Suchen"><svg><use href="#i-lens"/></svg></button>
            </div>
        </aside>
    </main>

    <div class="toolbar list-bar">
        <button title="Herabstufen"><svg><use href="#i-ar"/></svg></button>
        <button title="Heraufstufen" disabled><svg><use href="#i-al"/></svg></button>
        <button title="Mit Unterpunkten herabstufen"><svg><use href="#i-arr"/></svg></button>
        <button title="Mit Unterpunkten heraufstufen" disabled><svg><use href="#i-all"/></svg></button>
        <i class="sep"></i>
        <button title="Nach unten"><svg><use href="#i-ad"/></svg></button>
        <button title="Nach oben"><svg><use href="#i-au"/></svg></button>
        <button title="Mit Unterpunkten nach unten"><svg><use href="#i-add"/></svg></button>
        <button title="Mit Unterpunkten nach oben"><svg><use href="#i-auu"/></svg></button>
        <i class="sep"></i>
        <button title="Eintrag ohne Nummer"><svg><use href="#i-n1"/></svg></button>
        <button title="Nummerierung neu beginnen"><svg><use href="#i-n2"/></svg></button>
        <button title="Zur Liste hinzufügen"><svg><use href="#i-n3"/></svg></button>
        <i class="sep"></i>
        <button title="Nummerierung und Aufzählungszeichen"><svg><use href="#i-n4"/></svg></button>
    </div>

    <footer class="statusbar">
        <span class="disk"><svg viewBox="0 0 16 16"><path d="M.5.500h15v15H2.500l-2-2zM4 .5v6h9v-6M4.500 15v-5h7v5M7 11.500v3"/></svg></span>
        <span>Seite 1 von 1</span>
        <span>27 Wörter, 143 Zeichen</span>
        <span>Standard</span>
        <span>Deutsch (Deutschland)</span>
        <span class="mode"><svg viewBox="0 0 30 16"><path d="M.5 3.500h16v9H.5z" stroke="#2389d3"/><path d="M21 .5h6M21 15.500h6M24 .5v15" stroke="#222"/></svg></span>
        <span>Aufzählungszeichen ☑ : Ebene 1</span>
        <span class="zoom">
            <svg class="views" viewBox="0 0 74 16"><path d="M0 0h9l4 4v12H0z" fill="#0b63b0"/><g fill="#f4f4f4" stroke="#333"><path d="M18.500.500h7l4 4v11h-11zM25.500.500v4h4M31.500.500h7l4 4v11h-11zM38.500.500v4h4"/><path d="M61.500.500v15h-12v-11l4-4zM53.500.500v4h-4M61.500.500h7l4 4v11h-11zM68.500.500v4h4"/></g></svg>
            <button>−</button>
            <input type="range" min="0" max="100" value="50" aria-label="Zoom">
            <button>+</button>
            <span>120%</span>
        </span>
    </footer>

    <div class="taskbar">
        <button title="Menü"><svg><use href="#i-mint"/></svg></button>
        <button title="Desktop"><svg><use href="#i-desktop"/></svg></button>
        <i class="line"></i>
        <button title="Dateien"><svg><use href="#i-files"/></svg></button>
        <button title="Terminal"><svg><use href="#i-term"/></svg></button>
        <button title="Firefox"><svg><use href="#i-fox"/></svg></button>
        <button title="Fenster"><svg><use href="#i-windows"/></svg></button>
        <i class="dots"></i>
        <button class="task"><svg class="faded"><use href="#i-fox"/></svg>[Ärgernis mit Hyperlink…</button>
        <button class="task active"><svg><use href="#i-writer"/></svg>TestPerlchamp.odt – Li…</button>
        <span class="tray">
            <i class="dots"></i>
            <svg class="wide"><use href="#i-ruler"/></svg>
            <svg class="apart"><use href="#i-monitor"/></svg>
            <svg><use href="#i-signal"/></svg>
            <svg><use href="#i-sound"/></svg>
            <svg><use href="#i-bt"/></svg>
            <svg><use href="#i-batt"/></svg>
            <svg><use href="#i-shield"/></svg>
            <span class="clock">So,&nbsp; 3. Nov.<br>22:10</span>
        </span>
    </div>

    <div class="dialog" role="dialog" aria-labelledby="dlg-title">
        <div class="dialog-title">
            <span id="dlg-title">Listenvorlage: Aufzählungszeichen ☑</span>
            <button title="Schließen"><svg viewBox="0 0 10 10"><path d="M2 2l6 6M8 2l-6 6"/></svg></button>
        </div>
        <div class="tabs">
            <button>Allgemein</button>
            <button>Ungeordnet</button>
            <button>Geordnet</button>
            <button>Gliederung</button>
            <button>Bild</button>
            <button class="current marked">Position</button>
            <button>Anpassen</button>
        </div>
        <div class="panel">
            <div class="levels">
                <h3>Ebene</h3>
                <ul>
                    <li class="selected">1</li>
                    <li>2</li>
                    <li>3</li>
                    <li>4</li>
                    <li>5</li>
                    <li>6</li>
                    <li>7</li>
                    <li>8</li>
                    <li>9</li>
                    <li>10</li>
                    <li>1 - 10</li>
                </ul>
            </div>
            <div class="position">
                <h3>Position und Abstand</h3>
                <div class="form">
                    <label for="aligned">Ausgerichtet bei:</label>
                    <span class="spin"><input type="text" id="aligned" value="0,00 cm"><button disabled>−</button><button>+</button></span>
                    <label for="align">Ausrichtung:</label>
                    <span class="combo"><select id="align"><option>Links</option></select></span>
                    <label for="follow">Gefolgt von:</label>
                    <span class="combo"><select id="follow"><option>Tabulator</option></select></span>
                    <label for="tab">Tabulator bei:</label>
                    <span class="spin"><input type="text" id="tab" value="1,00 cm"><button>−</button><button>+</button></span>
                    <label for="indent">Einzug bei:</label>
                    <span class="spin"><input type="text" id="indent" value="1,00 cm"><button>−</button><button>+</button></span>
                    <i class="form-mark"></i>
                </div>
                <h3>Vorschau</h3>
                <div class="preview-row">
                    <svg class="preview" viewBox="0 0 523 150" preserveAspectRatio="xMinYMin">
                        <path d="M19 15h261M18 39h261M25 63h261M15 87h261M19 111h261M7 135h261" stroke="#bbb" stroke-width="2"/>
                        <g fill="none" stroke="#000" stroke-width="2"><path d="M3 5h13v13H3zM10 53h13v13H10zM3 101h13v13H3z"/><path d="M6 11l3 4 7-10M6 107l3 4 7-10"/></g>
                    </svg>
                    <button class="btn small">Standard</button>
                </div>
            </div>
        </div>
        <div class="dialog-actions">
            <button class="btn help">Hilfe</button>
            <button class="btn">Zurücksetzen</button>
            <button class="btn default">Anwenden</button>
            <button class="btn">Abbrechen</button>
            <button class="btn">OK</button>
        </div>
    </div>

    <script src="rulers.js"></script>
</body>
</html>
```
FILE: styles.css
```
* {
    box-sizing: border-box;
}
body {
    margin: 0;
    height: 100vh;
    display: flex;
    flex-direction: column;
    position: relative;
    overflow: hidden;
    background-color: #d6d6d6;
    color: #212121;
    font-family: "Open Sans", "Noto Sans", "DejaVu Sans", sans-serif;
    font-size: 13px;
    line-height: 18px;
}
ul, h1, h2, h3, p {
    margin: 0;
    padding: 0;
    list-style: none;
}
h2, h3 {
    font-size: 13px;
    font-weight: bold;
}
button, input, select {
    font: inherit;
    color: inherit;
    margin: 0;
    padding: 0;
    border: none;
    background: none;
}
.gradients {
    position: absolute;
    width: 0;
    height: 0;
}
.sprite {
    display: none;
}

/* text inside icons */
.abc {
    font: bold 12px "Open Sans", sans-serif;
    fill: #333;
    text-anchor: middle;
}
.serif-t, .style-t {
    font: bold 22px "Liberation Serif", serif;
    fill: #3c4245;
    text-anchor: middle;
}
.style-t {
    font-size: 28px;
}
.hash {
    font: bold 13px "Open Sans", sans-serif;
    fill: #2a5aa0;
    text-anchor: middle;
}
.hash-s {
    font: bold 12px "Open Sans", sans-serif;
    fill: #2f64ab;
}
.tiny {
    font: 8px "Open Sans", sans-serif;
    fill: #444;
}
.blue {
    fill: #2389d3;
}
.omega {
    font: bold 30px "Liberation Serif", serif;
    fill: #2d3336;
    text-anchor: middle;
}
.a-dark {
    font: bold 31px "Liberation Serif", serif;
    fill: #7c8183;
    stroke: #3c4143;
    stroke-width: 1px;
}
.heavy {
    stroke-width: 2px;
}
.slant {
    font-style: italic;
}
.a-blue {
    fill: #8fb5e6;
    stroke: #204d8e;
}
.num {
    font: bold 12px "Liberation Serif", serif;
    fill: #2a5aa0;
}
.s-a {
    font: bold 11px "Open Sans", sans-serif;
    fill: #2a5ca8;
    text-anchor: middle;
}
.ring {
    fill: #f7f7f7;
    stroke: #909090;
}
.arw {
    fill: #f4f4f2;
    stroke: #80807c;
}
.off {
    fill: #dedede;
    stroke: #bdbdbd;
}

/* title and menu */
.titlebar {
    height: 24px;
    display: flex;
    align-items: center;
    justify-content: center;
    position: relative;
    color: #a9a9a9;
    font-weight: 600;
    padding-top: 2px;
}
.win-buttons {
    position: absolute;
    right: 12px;
    display: flex;
    gap: 8px;
}
.win-buttons button {
    width: 13px;
}
.menubar {
    height: 24px;
    display: flex;
    align-items: center;
    padding-bottom: 2px;
}
.menubar button {
    padding: 0 7px;
}
.menubar .close-doc {
    margin-left: auto;
    padding: 0 10px;
}
.close-doc svg, .deck-title svg, .dialog-title svg {
    display: block;
    width: 12px;
    height: 12px;
    stroke: currentColor;
    stroke-width: 2;
}

/* toolbars */
.toolbar {
    height: 39px;
    display: flex;
    align-items: center;
    padding: 0 0 2px 3px;
}
.toolbar button {
    width: 33px;
    height: 35px;
    flex: none;
    display: flex;
    align-items: center;
    justify-content: center;
}
.toolbar svg {
    width: 24px;
    height: 24px;
}
.toolbar .caret {
    width: 11px;
}
.sep {
    flex: none;
    width: 8px;
}
.caret::after, .combo::after {
    content: "";
    border: 4px solid transparent;
    border-top: 5px solid #111;
    border-bottom: none;
}
.caret:disabled::after {
    border-top-color: #999;
}
.on {
    background: linear-gradient(#a6a6a6 30%, #b4b4b4 30%);
    border: 1px solid #989898;
    border-radius: 2px;
}
.format-bar {
    padding-left: 4px;
}
.combo {
    position: relative;
    display: block;
    height: 30px;
    border: 1px solid #a0a0a0;
    border-radius: 3px;
    background-color: #f8f8f8;
}
.combo select {
    appearance: none;
    width: 100%;
    height: 100%;
    padding: 0 9px;
    outline: none;
}
.combo::after {
    position: absolute;
    right: 10px;
    top: 12px;
    border-width: 5px 5px 0;
    pointer-events: none;
}
.split {
    margin-right: 8px;
    background: linear-gradient(to left, #f8f8f8 30px, #a0a0a0 30px, #a0a0a0 31px, #e8e8e8 31px);
}
.split select {
    padding: 0 4px;
}
.style-name {
    width: 172px;
}
.font-name {
    width: 189px;
}
.font-size {
    width: 89px;
    margin-right: 0;
}

/* editor */
main {
    flex: 1;
    min-height: 0;
    display: flex;
}
.editor {
    flex: 1;
    min-width: 0;
    display: grid;
    grid-template-columns: 21px 1fr 12px;
    grid-template-rows: 48px 1fr;
    overflow: hidden;
}
.ruler-corner i {
    display: block;
    width: 7px;
    height: 6px;
    margin: 10px 0 0 9px;
    border: solid #111;
    border-width: 0 0 2px 2px;
}
#hruler {
    width: 953px;
    height: 17px;
    margin: 4px 0 0 148px;
    overflow: visible;
}
#vruler {
    grid-row: 2;
    grid-column: 1;
    width: 17px;
    height: 100%;
    margin: 1px 0 0 4px;
}
#hruler text, #vruler text {
    font-size: 9px;
    fill: #444;
    text-anchor: middle;
}
.canvas {
    grid-row: 2;
    grid-column: 2;
    min-height: 0;
    padding-left: 148px;
    overflow: hidden;
}
.page {
    width: 953px;
    height: 100%;
    background-color: #fff;
    box-shadow: 0 0 5px rgba(0, 0, 0, 0.4);
    padding: 91px 90px 0 91px;
}
.scrollbar {
    grid-row: 1 / 3;
    grid-column: 3;
    border: solid #a5a5a5;
    border-width: 0 1px;
}
.scrollbar i {
    display: block;
    height: 400px;
    margin-top: 2px;
    background-color: #f0f0f0;
    border-top: 1px solid #999;
    border-radius: 5px;
}
.text-area {
    height: 100%;
    border: 1px solid #c4c4c4;
    border-bottom: none;
    padding-top: 50px;
    color: #000;
    font-size: 18px;
}
.text-area h1, .last {
    font-size: 27px;
    line-height: 40px;
    font-weight: 600;
}
.m {
    color: #2389d3;
    font-weight: normal;
}
.text-area h1 .m, .last .m {
    font-weight: 600;
}
.m.dark {
    color: #2376b8;
    text-shadow: 1px 1px #333;
}
.m.thin {
    color: #4aa0dd;
}
.todo {
    margin-top: 4px;
    line-height: 26px;
}
.todo li {
    display: flex;
    height: 26px;
    padding-left: 1px;
    white-space: nowrap;
}
.todo li::before {
    content: "☑";
    order: -2;
    width: 24px;
    flex: none;
    font-family: "DejaVu Sans", sans-serif;
}
.todo li::after {
    content: "→";
    order: -1;
    width: 19px;
    flex: none;
    color: #2389d3;
    font-family: "DejaVu Sans", sans-serif;
    font-size: 14px;
}
.glow {
    color: #fdfd8c;
    font-size: 15px;
    padding-left: 2px;
    text-shadow: 1px 1px #222;
}
.bit {
    color: #9a6a72;
    font-family: "Liberation Serif", serif;
    font-size: 20px;
    text-shadow: 1px 1px #4b2a55;
}
.green {
    color: #20876c;
    font-family: Lato, sans-serif;
}
.todo a {
    color: #6a5a9c;
    text-underline-offset: 3px;
}
.last {
    margin-top: 51px;
}

/* sidebar */
.sidebar {
    width: 402px;
    display: flex;
    gap: 12px;
    padding: 0 12px 8px 14px;
}
.sidebar button {
    display: flex;
    align-items: center;
    justify-content: center;
}
.deck {
    flex: 1;
    display: flex;
    flex-direction: column;
}
.deck-title {
    height: 32px;
    display: flex;
    align-items: center;
    margin-left: -5px;
}
.deck-title h2 {
    flex: 1;
}
.deck-title button {
    width: 12px;
}
.deck-title button:last-child {
    margin-right: 2px;
}
.grip {
    width: 9px;
    height: 16px;
    border-left: 2px dotted #888;
}
.deck-tools {
    height: 48px;
    display: flex;
    align-items: center;
    padding: 0 6px;
}
.deck-tools button {
    width: 26px;
    height: 30px;
    position: relative;
}
.deck-tools .caret {
    width: 18px;
}
.deck-tools .caret::after {
    border-width: 5px 5px 0;
}
.deck-tools svg {
    width: 17px;
    height: 17px;
}
.fill {
    flex: 1;
}
.marked {
    position: relative;
}
.marked::after, .form-mark {
    content: "";
    position: absolute;
    border: 4px solid #f00;
    border-radius: 2px;
}
.deck-tools .marked::after {
    inset: -4px -6px;
}
.styles {
    flex: 1;
    border: 1px solid #989898;
    background-color: #f8f8f8;
}
.styles li {
    height: 34px;
    line-height: 34px;
    padding-left: 19px;
}
.styles .selected, .levels .selected {
    background-color: #9ab87c;
    color: #fff;
    box-shadow: inset 0 1px #83966f, inset 0 -1px #83966f;
}
.styles .marked::after {
    inset: -7px 39px -4px -1px;
}
.check {
    height: 28px;
    padding-bottom: 1px;
    display: flex;
    align-items: center;
    gap: 6px;
}
.check input {
    appearance: none;
    width: 14px;
    height: 14px;
    border: 1px solid #5c6b4c;
    border-radius: 3px;
    background: linear-gradient(#fff, #fff) center / 6px 6px no-repeat, #9ab87c;
}
.tab-strip {
    width: 34px;
    padding-top: 1px;
    display: flex;
    flex-direction: column;
    gap: 12px;
}
.tab-strip button {
    height: 34px;
}
.tab-strip svg {
    width: 22px;
    height: 22px;
}
.tab-strip .burger {
    height: 30px;
}
.burger i {
    width: 10px;
    height: 10px;
    border: solid #111;
    border-width: 2px 0;
    background: linear-gradient(#111, #111) center / 100% 2px no-repeat;
}

/* bottom bars */
.list-bar {
    padding-left: 4px;
}
.statusbar {
    height: 25px;
    border: solid #989898;
    border-width: 1px 0;
    display: grid;
    grid-template-columns: 39px 198fr 302fr 231fr 265fr 127fr 243fr 275px;
    align-items: center;
    padding-top: 2px;
    font-size: 12px;
    white-space: nowrap;
}
.disk svg {
    display: block;
    width: 16px;
    height: 16px;
    margin-left: 9px;
    fill: none;
    stroke: #888;
}
.mode svg {
    display: block;
    width: 30px;
    height: 16px;
    fill: none;
}
.zoom {
    display: flex;
    align-items: center;
    padding-left: 4px;
}
.views {
    width: 74px;
    height: 16px;
    margin-right: 10px;
}
.zoom button {
    width: 19px;
    font-size: 16px;
    color: #777;
}
.zoom input {
    appearance: none;
    width: 98px;
    height: 16px;
    background: linear-gradient(#222, #222) center / 100% 2px no-repeat, linear-gradient(#222, #222) 29px center / 2px 6px no-repeat;
}
.zoom input::-webkit-slider-thumb {
    appearance: none;
    width: 9px;
    height: 9px;
    border: 1px solid #888;
    border-radius: 50%;
    background-color: #fff;
}
.zoom span {
    margin-left: 10px;
}
.taskbar {
    height: 30px;
    display: flex;
    align-items: center;
    padding-left: 1px;
    overflow: hidden;
}
.taskbar button {
    width: 30px;
    height: 28px;
    flex: none;
    display: flex;
    align-items: center;
    justify-content: center;
}
.taskbar svg {
    width: 22px;
    height: 22px;
    flex: none;
}
.line {
    width: 5px;
    height: 22px;
    border-left: 1px solid #bbb;
}
.dots {
    width: 4px;
    height: 18px;
    margin: 0 3px 0 4px;
    background: repeating-linear-gradient(#222 0 4px, transparent 4px 7px);
}
.taskbar .task {
    width: 187px;
    margin-right: 2px;
    padding-left: 4px;
    justify-content: flex-start;
    gap: 8px;
    border: 1px solid #a0a0a0;
    border-radius: 4px;
    background-color: #ececec;
    white-space: nowrap;
}
.taskbar .active {
    background-color: #a8a8a8;
    border-color: #888;
}
.task svg {
    width: 18px;
    height: 18px;
}
.faded {
    opacity: 0.6;
}
.tray {
    margin-left: auto;
    display: flex;
    align-items: center;
    gap: 4px;
}
.tray .dots {
    margin: 0;
}
.tray .wide {
    width: 31px;
    height: 30px;
}
.tray .apart {
    margin-right: 11px;
}
.clock {
    width: 77px;
    height: 26px;
    line-height: 15px;
    text-align: center;
    white-space: nowrap;
}

/* dialog window */
.dialog {
    position: absolute;
    left: 538px;
    top: 294px;
    width: 750px;
    border: 1px solid #888;
    border-radius: 6px 6px 0 0;
    background-color: #d6d6d6;
    box-shadow: 0 3px 16px rgba(0, 0, 0, 0.6);
}
.dialog-title {
    height: 21px;
    border-radius: 6px 6px 0 0;
    background-color: #e7e7e7;
    display: flex;
    justify-content: center;
    position: relative;
}
.dialog-title span {
    height: 26px;
    padding: 0 10px;
    line-height: 25px;
    background-color: #fff;
    color: #000;
    font-weight: 600;
    white-space: nowrap;
}
.dialog-title button {
    position: absolute;
    right: 11px;
    top: 5px;
    color: #999;
}
.tabs {
    display: flex;
    gap: 2px;
    padding: 12px 12px 0;
}
.tabs button {
    height: 25px;
    padding: 0 10px;
    border: 1px solid #989898;
    border-bottom: none;
    border-radius: 4px 4px 0 0;
    background-color: #e0e0e0;
}
.tabs .current {
    background-color: #ebebeb;
}
.tabs .marked::after {
    inset: -1px -2px -3px;
}
.panel {
    margin: 0 12px;
    border: 1px solid #989898;
    background-color: #ebebeb;
    padding: 5px 6px;
    display: flex;
    gap: 12px;
}
.levels {
    width: 60px;
    flex: none;
    display: flex;
    flex-direction: column;
}
.levels ul {
    flex: 1;
    margin: 5px 0 0 12px;
    border: 1px solid #989898;
    background-color: #f8f8f8;
}
.levels li {
    height: 22px;
    line-height: 22px;
    padding-left: 4px;
    white-space: nowrap;
}
.position {
    flex: 1;
    min-width: 0;
}
.form {
    position: relative;
    display: grid;
    grid-template-columns: 113px 174px;
    grid-auto-rows: 30px;
    gap: 6px 12px;
    align-items: center;
    margin: 5px 0 11px;
}
.form label {
    text-align: right;
    white-space: nowrap;
}
.spin {
    height: 30px;
    display: flex;
    border: 1px solid #a0a0a0;
    border-radius: 3px;
    background-color: #e6e6e6;
    overflow: hidden;
}
.spin input {
    flex: 1;
    min-width: 0;
    padding: 0 4px;
}
.spin button {
    width: 26px;
    border-left: 1px solid #a0a0a0;
    background-color: #f8f8f8;
    font-size: 20px;
}
.spin button:disabled {
    background-color: #d6d6d6;
    color: #888;
}
.form-mark {
    left: 20px;
    top: 104px;
    width: 297px;
    height: 78px;
}
.preview-row {
    display: flex;
    align-items: flex-end;
    gap: 12px;
    margin: 5px 0 0 12px;
}
.preview {
    flex: 1;
    min-width: 0;
    height: 152px;
    border: 1px solid #989898;
    background-color: #fff;
}
.btn {
    width: 122px;
    height: 32px;
    border: 1px solid #a8a8a8;
    border-radius: 3px;
    background-color: #f8f8f8;
    box-shadow: 0 1px 1px rgba(0, 0, 0, 0.2);
}
.small {
    width: 89px;
    height: 28px;
}
.default {
    border: 2px solid #9ab87c;
}
.dialog-actions {
    display: flex;
    gap: 6px;
    padding: 19px 18px 18px;
}
.help {
    margin-right: auto;
}
```
FILE: rulers.js
```
const cm = 45.35; // one centimetre at 120 % zoom
const ns = 'http://www.w3.org/2000/svg';

function add(parent, name, attrs, text) {
    const el = document.createElementNS(ns, name);
    for (const key in attrs) {
        el.setAttribute(key, attrs[key]);
    }
    if (text !== undefined) {
        el.textContent = text;
    }
    parent.appendChild(el);
}

function horizontal() {
    const svg = document.getElementById('hruler');
    const zero = 91;
    const end = 862;
    add(svg, 'rect', { x: 0.5, y: 0.5, width: 951, height: 16, fill: '#d6d6d6', stroke: '#989898' });
    add(svg, 'rect', { x: zero, y: 0, width: end - zero, height: 17, fill: '#f8f8f8' });
    for (let i = -3; i < 38; i++) {
        const x = Math.round(zero + i * cm / 2) + 0.5;
        if (i % 2) {
            add(svg, 'path', { d: `M${x} 5v5`, stroke: '#999' });
        } else if (i !== 0) {
            add(svg, 'path', { d: `M${x} 0v2M${x} 15v2`, stroke: '#999' });
            add(svg, 'text', { x: x, y: 11 }, Math.abs(i / 2));
        }
    }
    // default tab stops
    for (let k = 1; k < 13; k++) {
        const x = Math.round(123 + k * cm * 1.25) + 0.5;
        add(svg, 'path', { d: `M${x} 14v3M${x - 2} 17h4`, stroke: '#111' });
    }
    add(svg, 'path', { d: 'M88-1h9v4l-4.500 4-4.500-4z', fill: '#eee', stroke: '#222' });
    add(svg, 'path', { d: 'M118 17v-4l5-4 5 4v4z', fill: '#d6d6d6', stroke: '#222' });
    add(svg, 'path', { d: 'M857 17v-4l5-4 5 4v4z', fill: '#eee', stroke: '#222' });
}

function vertical() {
    const svg = document.getElementById('vruler');
    const zero = 91;
    add(svg, 'rect', { x: 0, y: zero, width: 17, height: 2000, fill: '#f8f8f8' });
    add(svg, 'rect', { x: 0.5, y: 0.5, width: 15, height: zero, fill: '#d6d6d6', stroke: '#989898' });
    // numbers stop where the visible part of the ruler stops
    const last = Math.floor((svg.clientHeight - zero - 6) / (cm / 2));
    for (let i = -3; i <= last; i++) {
        const y = Math.round(zero + i * cm / 2) + 0.5;
        if (i % 2) {
            add(svg, 'path', { d: `M5 ${y}h5`, stroke: '#999' });
        } else if (i !== 0) {
            add(svg, 'path', { d: `M0 ${y}h2M15 ${y}h2`, stroke: '#999' });
            add(svg, 'text', { transform: `translate(11 ${y}) rotate(-90)` }, Math.abs(i / 2));
        }
    }
}

horizontal();
vertical();
```
